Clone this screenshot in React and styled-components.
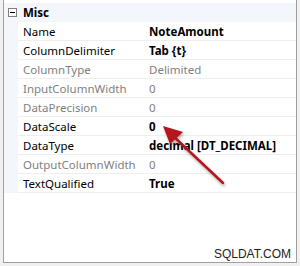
import React from 'react';
import styled, { createGlobalStyle } from 'styled-components';

const GlobalStyle = createGlobalStyle`
	html, body {
		margin: 0;
		padding: 0;
		background: #f0f0f0;
	}
	body {
		font-family: "Noto Sans", "Open Sans", sans-serif;
	}
`;

const Frame = styled.div`
	position: relative;
	box-sizing: border-box;
	margin-left: 3px;
	width: 294px;
	height: 263px;
	padding-top: 3px;
	background: #fff;
	border: 1px solid #a0a0a0;
	border-top: none;
`;

const Grid = styled.div`
	display: grid;
	grid-template-columns: 14px 130px 1fr;
`;

const Gutter = styled.div`
	background: #f3f6fb;
	display: flex;
	align-items: center;
	justify-content: center;
`;

const Category = styled.div`
	grid-column: 2 / 4;
	height: 19px;
	display: flex;
	align-items: center;
	padding-left: 5px;
	font-size: 11.5px;
	font-weight: bold;
	color: #000;
	background: #f3f6fb;
`;

const Toggle = styled.span`
	box-sizing: border-box;
	width: 9px;
	height: 9px;
	margin-left: 2px;
	border: 1px solid #808080;
	background: #fff;
	display: flex;
	align-items: center;
	justify-content: center;

	&::after {
		content: '';
		width: 5px;
		height: 1px;
		background: #000;
	}
`;

const Cell = styled.div`
	box-sizing: border-box;
	height: 19px;
	display: flex;
	align-items: center;
	font-size: 11.5px;
	white-space: nowrap;
	overflow: hidden;
	border-bottom: 1px solid #eeeeee;
	padding-left: ${props => (props.$value ? '1px' : '5px')};
	color: ${props => (props.$muted ? '#808080' : '#000')};
	font-weight: ${props => (props.$bold ? 'bold' : 'normal')};
`;

const Watermark = styled.div`
	position: absolute;
	right: 5px;
	bottom: 1px;
	font-family: "Liberation Sans", Arial, sans-serif;
	font-size: 12px;
	color: #222;
`;

const Arrow = styled.svg`
	position: absolute;
	left: 150px;
	top: 118px;
`;

const rows = [
	{ name: 'Name', value: 'NoteAmount', bold: true },
	{ name: 'ColumnDelimiter', value: 'Tab {t}', bold: true },
	{ name: 'ColumnType', value: 'Delimited', muted: true },
	{ name: 'InputColumnWidth', value: '0', muted: true },
	{ name: 'DataPrecision', value: '0', muted: true },
	{ name: 'DataScale', value: '0', bold: true },
	{ name: 'DataType', value: 'decimal [DT_DECIMAL]', bold: true },
	{ name: 'OutputColumnWidth', value: '0', muted: true },
	{ name: 'TextQualified', value: 'True', bold: true },
];

const App = () => (
	<>
		<GlobalStyle />
		<Frame>
			<Grid>
				<Gutter>
					<Toggle />
				</Gutter>
				<Category>Misc</Category>
				{rows.map(row => (
					<React.Fragment key={row.name}>
						<Gutter />
						<Cell $muted={row.muted}>{row.name}</Cell>
						<Cell $value $muted={row.muted} $bold={row.bold}>
							{row.value}
						</Cell>
					</React.Fragment>
				))}
			</Grid>
			<Arrow width="80" height="75" viewBox="0 0 80 75">
				<defs>
					<filter id="shadow" x="-20%" y="-20%" width="140%" height="140%">
						<feDropShadow dx="1" dy="2" stdDeviation="1.5" floodColor="#000" floodOpacity="0.35" />
					</filter>
				</defs>
				<g filter="url(#shadow)">
					<line x1="69" y1="65" x2="18" y2="17" stroke="#b3161b" strokeWidth="2.5" strokeLinecap="round" />
					<polygon points="9,8 29,14 16,26" fill="#b3161b" />
				</g>
			</Arrow>
			<Watermark>SQLDAT.COM</Watermark>
		</Frame>
	</>
);

export default App;
